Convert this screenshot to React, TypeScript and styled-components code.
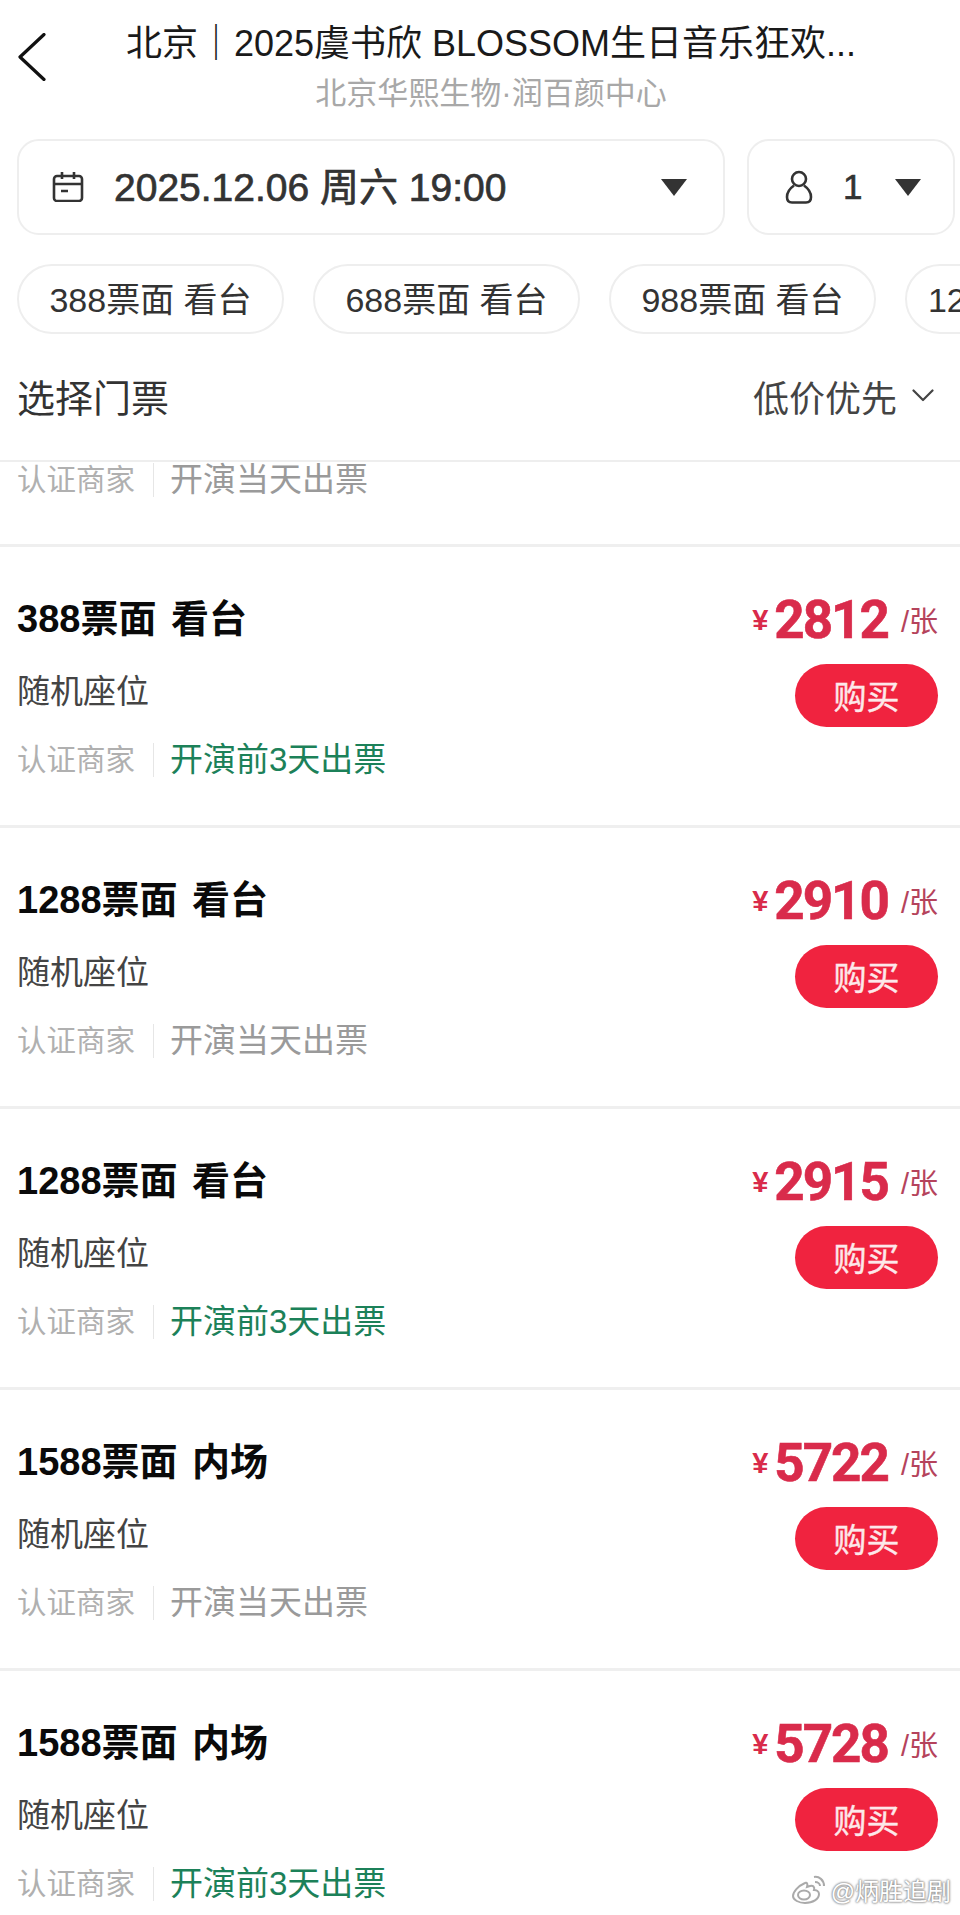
import React from "react";
import styled, { createGlobalStyle } from "styled-components";

const Global = createGlobalStyle`
  html, body { margin: 0; padding: 0; background: #fff; }
  body { font-family: "Liberation Sans", "Noto Sans CJK SC", sans-serif; }
  * { box-sizing: border-box; }
`;

const Page = styled.div`
  position: relative;
  width: 960px;
  height: 1915px;
  overflow: hidden;
  background: #fff;
`;
const Header = styled.header`
  display: grid;
  grid-template-columns: 60px 1fr 38px;
  align-items: start;
  height: 139px;
  padding-top: 22px;
`;
const BackButton = styled.div`
  padding: 11px 0 0 18px;
  line-height: 0;
`;
const HeaderText = styled.div`
  display: flex;
  flex-direction: column;
  align-items: center;
`;
const Title = styled.div`
  font-size: 36px;
  line-height: 44px;
  color: #1a1a1a;
  white-space: nowrap;
`;
const Venue = styled.div`
  margin-top: 9px;
  font-size: 31px;
  line-height: 38px;
  color: #a8a8a8;
  white-space: nowrap;
`;
const Toolbar = styled.div`
  display: flex;
  gap: 22px;
  padding: 0 7px 0 17px;
`;
const SelectBox = styled.div<{ $width: number; $pad: number }>`
  display: flex;
  align-items: center;
  width: ${(p) => p.$width}px;
  height: 96px;
  padding: 0 ${(p) => p.$pad}px;
  border: 2px solid #eeeeee;
  border-radius: 22px;
  flex: none;
`;
const DateText = styled.span`
  margin-left: 30px;
  margin-top: -6px;
  font-size: 39px;
  color: #333;
  white-space: nowrap;
  -webkit-text-stroke: 0.7px #333;
`;
const CountText = styled.span`
  margin-left: 30px;
  font-size: 35px;
  color: #333;
  -webkit-text-stroke: 0.6px #333;
`;
const Caret = styled.span<{ $left: number }>`
  width: 0;
  height: 0;
  margin-left: ${(p) => p.$left}px;
  margin-top: 1px;
  border-left: 13px solid transparent;
  border-right: 13px solid transparent;
  border-top: 17px solid #333;
  flex: none;
`;
const ChipRow = styled.div`
  display: flex;
  gap: 29px;
  margin-top: 29px;
  padding-left: 17px;
  overflow: hidden;
`;
const Chip = styled.div`
  flex: none;
  display: flex;
  align-items: center;
  justify-content: center;
  width: 267px;
  height: 70px;
  padding-bottom: 3px;
  border: 2px solid #eeeeee;
  border-radius: 35px;
  font-size: 34px;
  color: #333;
  white-space: nowrap;
`;
const SectionHead = styled.div`
  display: flex;
  align-items: center;
  justify-content: space-between;
  height: 128px;
  padding: 0 26px 3px 17px;
  border-bottom: 2px solid #eeeeee;
`;
const SectionTitle = styled.div`
  font-size: 38px;
  color: #333;
`;
const Sort = styled.div`
  display: flex;
  align-items: center;
  gap: 15px;
  font-size: 36px;
  color: #444;
`;
const Card = styled.section`
  height: 281px;
  padding: 42px 22px 0 17px;
  border-bottom: 3px solid #efefef;
  display: grid;
  grid-template-columns: 1fr auto;
`;
const StubCard = styled.section`
  height: 85px;
  padding: 0 0 0 17px;
  border-bottom: 3px solid #efefef;
  overflow: hidden;
`;
const Info = styled.div`
  display: flex;
  flex-direction: column;
  padding-top: 5px;
`;
const TicketName = styled.div`
  font-size: 38px;
  line-height: 50px;
  font-weight: 700;
  word-spacing: 4px;
  color: #0a0a0a;
`;
const Seat = styled.div`
  margin-top: 25px;
  font-size: 33px;
  line-height: 46px;
  color: #444;
`;
const Meta = styled.div`
  margin-top: 22px;
  display: flex;
  align-items: center;
  height: 46px;
`;
const StubMeta = styled(Meta)`
  margin-top: -5px;
`;
const Merchant = styled.span`
  font-size: 29.5px;
  color: #b0b0b0;
  padding-right: 18px;
  border-right: 1.5px solid #e6e6e6;
  line-height: 34px;
`;
const Delivery = styled.span<{ $green?: boolean }>`
  margin-left: 16px;
  font-size: 33px;
  line-height: 34px;
  color: ${(p) => (p.$green ? "#1c8159" : "#9a9a9a")};
`;
const Buy = styled.div`
  display: flex;
  flex-direction: column;
  align-items: flex-end;
`;
const PriceRow = styled.div`
  display: flex;
  align-items: center;
  height: 58px;
  margin-top: 2px;
  color: #d92b4b;
`;
const Yen = styled.span`
  font-size: 29px;
  line-height: 34px;
  font-weight: 700;
  margin-right: 6px;
`;
const Amount = styled.span`
  font-family: "Roboto", "Liberation Sans", sans-serif;
  font-size: 53px;
  font-weight: 700;
  line-height: 58px;
  letter-spacing: -2px;
  -webkit-text-stroke: 0.6px #d92b4b;
`;
const Unit = styled.span`
  margin-left: 13px;
  margin-top: 4px;
  font-size: 29px;
  line-height: 34px;
  color: #b5435c;
`;
const BuyButton = styled.div`
  margin-top: 15px;
  width: 143px;
  height: 63px;
  padding-bottom: 2px;
  border-radius: 32px;
  background: #f0233f;
  color: #fde8ea;
  font-size: 33px;
  -webkit-text-stroke: 0.4px #fde8ea;
  display: flex;
  align-items: center;
  justify-content: center;
`;
const Watermark = styled.div`
  position: absolute;
  right: 9px;
  bottom: 8px;
  display: flex;
  align-items: center;
  gap: 4px;
  font-size: 24px;
  color: #fff;
  text-shadow: 0 0 2px #8a8a8a, 0 0 2px #8a8a8a, 0 0 3px #aaa;
`;

const tickets = [
  { name: "388票面 看台", price: "2812", green: true },
  { name: "1288票面 看台", price: "2910", green: false },
  { name: "1288票面 看台", price: "2915", green: true },
  { name: "1588票面 内场", price: "5722", green: false },
  { name: "1588票面 内场", price: "5728", green: true },
];

export default function App() {
  return (
    <Page>
      <Global />
      <Header>
        <BackButton>
          <svg width="28" height="48" viewBox="0 0 28 48" fill="none">
            <path d="M26 1.5 2 24l24 22.5" stroke="#111" strokeWidth="3.2" strokeLinecap="round" strokeLinejoin="round" />
          </svg>
        </BackButton>
        <HeaderText>
          <Title>北京｜2025虞书欣 BLOSSOM生日音乐狂欢...</Title>
          <Venue>北京华熙生物·润百颜中心</Venue>
        </HeaderText>
      </Header>
      <Toolbar>
        <SelectBox $width={708} $pad={33}>
          <svg width="32" height="30" viewBox="0 0 32 30" fill="none" stroke="#333" strokeWidth="2.6" style={{ flex: "none" }}>
            <rect x="2" y="4" width="28" height="25" rx="3" />
            <path d="M2 12h28M10 0v7M22 0v7M9 19h7" />
          </svg>
          <DateText>2025.12.06 周六 19:00</DateText>
          <Caret $left={155} />
        </SelectBox>
        <SelectBox $width={208} $pad={36}>
          <svg width="28" height="34" viewBox="0 0 28 34" fill="none" stroke="#333" strokeWidth="2.6" style={{ flex: "none" }}>
            <circle cx="14" cy="9" r="7" />
            <path d="M9 15.5C4 19 2 23 2 27c0 3.5 2 5.5 5 5.5h14c3 0 5-2 5-5.5 0-4-2-8-7-11.5" />
          </svg>
          <CountText>1</CountText>
          <Caret $left={33} />
        </SelectBox>
      </Toolbar>
      <ChipRow>
        <Chip>388票面 看台</Chip>
        <Chip>688票面 看台</Chip>
        <Chip>988票面 看台</Chip>
        <Chip>1288票面 看台</Chip>
      </ChipRow>
      <SectionHead>
        <SectionTitle>选择门票</SectionTitle>
        <Sort>
          低价优先
          <svg width="22" height="13" viewBox="0 0 22 13" fill="none">
            <path d="M1.5 1.5 11 11l9.5-9.5" stroke="#444" strokeWidth="2.2" strokeLinecap="round" strokeLinejoin="round" />
          </svg>
        </Sort>
      </SectionHead>
      <StubCard>
        <StubMeta>
          <Merchant>认证商家</Merchant>
          <Delivery>开演当天出票</Delivery>
        </StubMeta>
      </StubCard>
      {tickets.map((t) => (
        <Card key={t.price}>
          <Info>
            <TicketName>{t.name}</TicketName>
            <Seat>随机座位</Seat>
            <Meta>
              <Merchant>认证商家</Merchant>
              <Delivery $green={t.green}>{t.green ? "开演前3天出票" : "开演当天出票"}</Delivery>
            </Meta>
          </Info>
          <Buy>
            <PriceRow>
              <Yen>¥</Yen>
              <Amount>{t.price}</Amount>
              <Unit>/张</Unit>
            </PriceRow>
            <BuyButton>购买</BuyButton>
          </Buy>
        </Card>
      ))}
      <Watermark>
        <svg width="36" height="30" viewBox="0 0 36 30" fill="none" stroke="#aaa" strokeWidth="2">
          <path d="M14 8C7 11 2 17 2 21c0 4 6 7 12 7 8 0 14-4 14-9 0-3-3-4-5-4 1-3-1-5-4-4l-3 1c1-3 0-5-2-4z" fill="#fff" />
          <ellipse cx="13" cy="20" rx="6" ry="4.5" />
          <path d="M23 2c5-1 10 3 10 9M24 7c3 0 5 2 5 4" />
        </svg>
        @炳胜追剧
      </Watermark>
    </Page>
  );
}
